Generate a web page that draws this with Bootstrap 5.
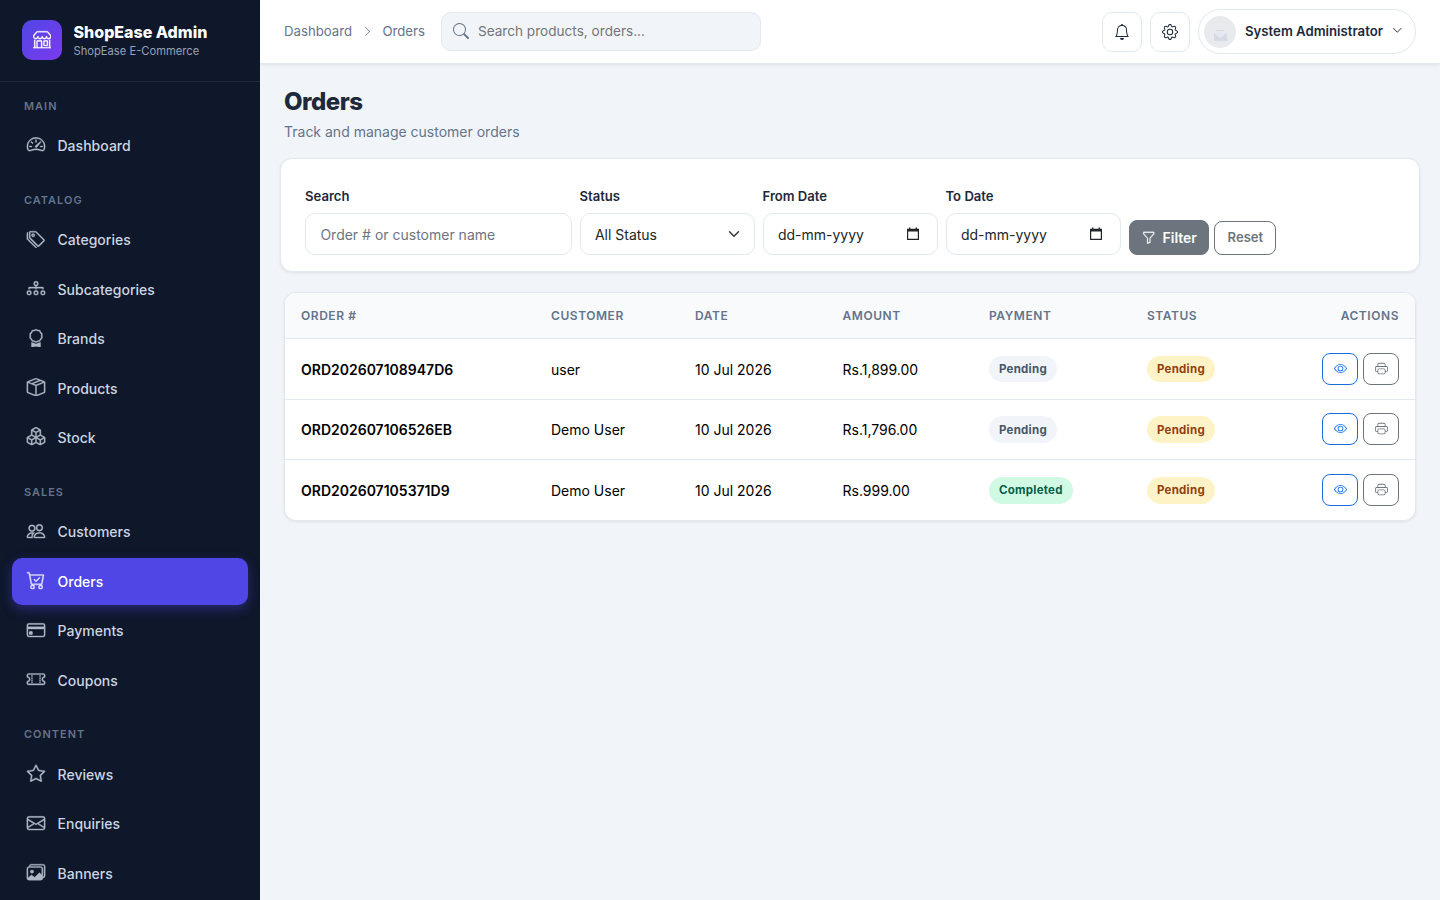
<!DOCTYPE html>
<html lang="en">
<head>
<meta charset="utf-8">
<meta name="viewport" content="width=device-width, initial-scale=1">
<title>Orders - ShopEase Admin</title>
<link href="https://cdn.jsdelivr.net/npm/bootstrap@5.3.0/dist/css/bootstrap.min.css" rel="stylesheet">
<style>
  body { font-family: Inter, "Liberation Sans", sans-serif; line-height: 1.6; background: #f1f5f9; color: #1e293b; height: 100vh; overflow: hidden; }
  svg.ico { width: 1em; height: 1em; fill: currentColor; display: block; flex: none; }
  a { text-decoration: none; color: inherit; }

  .sidebar { width: 260px; background: #0f172a; height: 100vh; overflow: hidden; flex: none; }
  .brand-row { height: 82px; padding: 0 22px 1px; gap: 11.5px; border-bottom: 1px solid rgba(255,255,255,.08); }
  .brand-logo { width: 40px; height: 40px; border-radius: 10px; background: linear-gradient(135deg, #4f46e5, #7c3aed); color: #fff; font-size: 18.4px; }
  .brand-logo svg { stroke: currentColor; stroke-width: .25; margin-top: -1px; }
  .brand-name { font-size: 16px; font-weight: 800; color: #fff; line-height: 20px; padding-top: 2px; }
  .brand-sub { font-size: 11.2px; color: #94a3b8; line-height: 19px; }
  .nav-label { font-size: 10.9px; font-weight: 600; letter-spacing: 1.05px; color: #64748b; line-height: 18px; padding: 19px 12px 7.7px; }
  .nav-label.first { padding-top: 14.5px; }
  .side-link { height: 47.04px; margin-bottom: 2.45px; padding: .9px 14px 0; gap: 11.5px; border-radius: 10px; color: #cbd5e1; font-size: 14px; font-weight: 500; letter-spacing: .02px; }
  .side-link svg { font-size: 18.4px; width: 20px; opacity: .85; margin-top: -3px; stroke: currentColor; stroke-width: .3; }
  .side-link.active { background: #4f46e5; color: #fff; box-shadow: 0 4px 12px rgba(79,70,229,.4); }

  .topbar { height: 64px; background: #fff; border-bottom: 1px solid #e2e8f0; box-shadow: 0 1px 3px rgba(0,0,0,.08); padding: 0 24px; }
  .crumbs { font-size: 13.2px; color: #64748b; gap: 9.7px; }
  .crumbs svg { font-size: 11px; }
  .top-search { width: 320px; height: 39px; border: 1px solid #e2e8f0; border-radius: 10px; background: #f1f5f9; color: #64748b; padding: 0 11px; gap: 9px; }
  .top-search svg { margin-top: -1px; }
  .top-search input { border: 0; background: none; outline: 0; font-size: 13.6px; width: 100%; padding: 0; }
  .top-search input::placeholder { color: #757575; }
  .icon-btn { width: 40px; height: 40px; border: 1px solid #e2e8f0; border-radius: 10px; background: #fff; color: #1e293b; font-size: 16px; }
  .user-pill { width: 218px; height: 45px; border: 1px solid #e2e8f0; border-radius: 50px; padding: 0 13px 0 5px; font-size: 13.2px; font-weight: 600; }
  .user-pill .caret { font-size: 10.5px; margin-top: -2px; }
  .avatar { width: 32px; height: 32px; margin-right: 9px; }

  .page-title { font-size: 24px; font-weight: 800; line-height: 29px; letter-spacing: -.48px; color: #1e293b; padding-top: 23px; }
  .page-sub { font-size: 14px; line-height: 23px; color: #64748b; padding-top: 4px; }

  .panel { background: #fff; border: 1px solid #e2e8f0; border-radius: 12px; box-shadow: 0 1px 3px rgba(0,0,0,.08); }
  .filters { padding: 16px 20px; margin: 15px -4px 0; }
  .filters .form-label { font-size: 13.1px; font-weight: 600; color: #1e293b; line-height: 21.8px; padding-top: 3px; margin-bottom: 5px; display: block; }
  .filters .form-control, .filters .form-select { height: 42px; border-color: #e2e8f0; border-radius: 10px; font-size: 14px; padding: 2px 14.4px 0; color: #212529; }
  .filters .form-control::placeholder { color: #6c757d; }
  .filters .form-select { background-position: right 12px center; }
  .date-box svg { font-size: 16px; margin: -2px 1px 0 0; }
  .btn-filter { height: 35px; border-radius: 8px; background: #6c757d; color: #fff; font-size: 14px; font-weight: 600; padding: 1px 11.5px 0 12px; border: 1px solid #6c757d; gap: 7.5px; }
  .btn-filter svg { font-size: 13.5px; stroke: currentColor; stroke-width: .3; }
  .btn-reset { width: 62px; height: 34px; border-radius: 8px; font-size: 13.1px; font-weight: 600; padding: 0; border: 1px solid #6c757d; color: #6c757d; background: #fff; margin-left: 5px; }

  .orders-panel { margin-top: 20.3px; overflow: hidden; }
  .orders-table { table-layout: fixed; margin: 0; color: #000; font-size: 14px; }
  .orders-table th { background: #f8fafc; color: #64748b; font-size: 12px; font-weight: 600; letter-spacing: .55px; text-transform: uppercase; padding: 0 16px; height: 45.5px; border-bottom: 1px solid #e2e8f0; vertical-align: middle; }
  .orders-table td { padding: 2px 16px 0; height: 60.5px; border-bottom: 1px solid #e2e8f0; vertical-align: middle; }
  .orders-table td:last-child { padding-top: 0; }
  .orders-table tr:last-child td { border-bottom: 0; }
  .orders-table .order-no { font-weight: 600; }
  .c-order { width: 250px; } .c-cust { width: 144px; } .c-date { width: 147.5px; } .c-amt { width: 146.5px; } .c-pay { width: 158px; } .c-stat { width: 130px; }
  .pill { display: inline-block; font-size: 11.5px; font-weight: 700; line-height: 18px; padding: 4.4px 10px; border-radius: 50px; position: relative; top: -.8px; letter-spacing: .25px; }
  .pill-muted { background: #f1f5f9; color: #475569; }
  .pill-warn { background: #fef3c7; color: #92400e; }
  .pill-ok { background: #d1fae5; color: #065f46; }
  .act { width: 36px; height: 32px; border: 1px solid; border-radius: 8px; font-size: 13px; padding: 0; background: #fff; }
  .act svg { margin-top: -1.5px; }
  .act-view { color: #0d6efd; border-color: #1a6dd8; margin-right: 5px; } .act-print { color: #6c757d; }
</style>
</head>
<body class="d-flex">
<svg class="d-none" xmlns="http://www.w3.org/2000/svg">
  <symbol id="shop" viewBox="0 0 16 16"><path d="M2.97 1.35A1 1 0 0 1 3.73 1h8.54a1 1 0 0 1 .76.35l2.609 3.044A1.5 1.5 0 0 1 16 5.37v.255a2.375 2.375 0 0 1-4.25 1.458A2.371 2.371 0 0 1 9.875 8 2.37 2.37 0 0 1 8 7.083 2.37 2.37 0 0 1 6.125 8a2.37 2.37 0 0 1-1.875-.917A2.375 2.375 0 0 1 0 5.625V5.37a1.5 1.5 0 0 1 .361-.976zm1.78 4.275a1.375 1.375 0 0 0 2.75 0 .5.5 0 0 1 1 0 1.375 1.375 0 0 0 2.75 0 .5.5 0 0 1 1 0 1.375 1.375 0 1 0 2.75 0V5.37a.5.5 0 0 0-.12-.325L12.27 2H3.73L1.12 5.045A.5.5 0 0 0 1 5.37v.255a1.375 1.375 0 0 0 2.75 0 .5.5 0 0 1 1 0M1.5 8.5A.5.5 0 0 1 2 9v6h1v-5a1 1 0 0 1 1-1h3a1 1 0 0 1 1 1v5h6V9a.5.5 0 0 1 1 0v6h.5a.5.5 0 0 1 0 1H.5a.5.5 0 0 1 0-1H1V9a.5.5 0 0 1 .5-.5M4 15h3v-5H4zm5-5a1 1 0 0 1 1-1h2a1 1 0 0 1 1 1v3a1 1 0 0 1-1 1h-2a1 1 0 0 1-1-1zm3 0h-2v3h2z"/></symbol>
  <symbol id="speed" viewBox="0 0 16 16"><path d="M8 4a.5.5 0 0 1 .5.5V6a.5.5 0 0 1-1 0V4.5A.5.5 0 0 1 8 4M3.732 5.732a.5.5 0 0 1 .707 0l.915.914a.5.5 0 1 1-.708.708l-.914-.915a.5.5 0 0 1 0-.707M2 10a.5.5 0 0 1 .5-.5h1.586a.5.5 0 0 1 0 1H2.5A.5.5 0 0 1 2 10m9.5 0a.5.5 0 0 1 .5-.5h1.5a.5.5 0 0 1 0 1H12a.5.5 0 0 1-.5-.5m.754-4.246a.39.39 0 0 0-.527-.02L7.547 9.31a.91.91 0 1 0 1.302 1.258l3.434-4.297a.39.39 0 0 0-.029-.518z"/><path fill-rule="evenodd" d="M0 10a8 8 0 1 1 15.547 2.661c-.442 1.253-1.845 1.602-2.932 1.25C11.309 13.488 9.475 13 8 13c-1.474 0-3.31.488-4.615.911-1.087.352-2.49.003-2.932-1.25A8 8 0 0 1 0 10m8-7a7 7 0 0 0-6.603 9.329c.203.575.923.876 1.68.63C4.397 12.533 6.358 12 8 12s3.604.532 4.923.96c.757.245 1.477-.056 1.68-.631A7 7 0 0 0 8 3"/></symbol>
  <symbol id="tags" viewBox="0 0 16 16"><path d="M3 2v4.586l7 7L14.586 9l-7-7zM2 2a1 1 0 0 1 1-1h4.586a1 1 0 0 1 .707.293l7 7a1 1 0 0 1 0 1.414l-4.586 4.586a1 1 0 0 1-1.414 0l-7-7A1 1 0 0 1 2 6.586z"/><path d="M5.5 5a.5.5 0 1 1 0-1 .5.5 0 0 1 0 1m0 1a1.5 1.5 0 1 0 0-3 1.5 1.5 0 0 0 0 3M1 7.086a1 1 0 0 0 .293.707L8.75 15.25l-.043.043a1 1 0 0 1-1.414 0l-7-7A1 1 0 0 1 0 7.586V3a1 1 0 0 1 1-1z"/></symbol>
  <symbol id="diagram" viewBox="0 0 16 16"><path fill-rule="evenodd" d="M6 3.5A1.5 1.5 0 0 1 7.5 2h1A1.5 1.5 0 0 1 10 3.5v1A1.5 1.5 0 0 1 8.5 6v1H14a.5.5 0 0 1 .5.5v1a.5.5 0 0 1-1 0V8h-5v.5a.5.5 0 0 1-1 0V8h-5v.5a.5.5 0 0 1-1 0v-1A.5.5 0 0 1 2 7h5.5V6A1.5 1.5 0 0 1 6 4.5zM8.5 5a.5.5 0 0 0 .5-.5v-1a.5.5 0 0 0-.5-.5h-1a.5.5 0 0 0-.5.5v1a.5.5 0 0 0 .5.5zM0 11.5A1.5 1.5 0 0 1 1.5 10h1A1.5 1.5 0 0 1 4 11.5v1A1.5 1.5 0 0 1 2.5 14h-1A1.5 1.5 0 0 1 0 12.5zm1.5-.5a.5.5 0 0 0-.5.5v1a.5.5 0 0 0 .5.5h1a.5.5 0 0 0 .5-.5v-1a.5.5 0 0 0-.5-.5zm4.5.5A1.5 1.5 0 0 1 7.5 10h1a1.5 1.5 0 0 1 1.5 1.5v1A1.5 1.5 0 0 1 8.5 14h-1A1.5 1.5 0 0 1 6 12.5zm1.5-.5a.5.5 0 0 0-.5.5v1a.5.5 0 0 0 .5.5h1a.5.5 0 0 0 .5-.5v-1a.5.5 0 0 0-.5-.5zm4.5.5a1.5 1.5 0 0 1 1.5-1.5h1a1.5 1.5 0 0 1 1.5 1.5v1a1.5 1.5 0 0 1-1.5 1.5h-1a1.5 1.5 0 0 1-1.5-1.5zm1.5-.5a.5.5 0 0 0-.5.5v1a.5.5 0 0 0 .5.5h1a.5.5 0 0 0 .5-.5v-1a.5.5 0 0 0-.5-.5z"/></symbol>
  <symbol id="award" viewBox="0 0 16 16"><path d="M9.669.864 8 0 6.331.864l-1.858.282-.842 1.68-1.337 1.32L2.6 6l-.306 1.854 1.337 1.32.842 1.68 1.858.282L8 12l1.669-.864 1.858-.282.842-1.68 1.337-1.32L13.4 6l.306-1.854-1.337-1.32-.842-1.68zm1.196 1.193.684 1.365 1.086 1.072L12.387 6l.248 1.506-1.086 1.072-.684 1.365-1.51.229L8 10.874l-1.355-.702-1.51-.229-.684-1.365-1.086-1.072L3.614 6l-.25-1.506 1.087-1.072.684-1.365 1.51-.229L8 1.126l1.356.702z"/><path d="M4 11.794V16l4-1 4 1v-4.206l-2.018.306L8 13.126 6.018 12.1z"/></symbol>
  <symbol id="box" viewBox="0 0 16 16"><path d="M8.186 1.113a.5.5 0 0 0-.372 0L1.846 3.5l2.404.961L10.404 2zm3.564 1.426L5.596 5 8 5.961 14.154 3.5zm3.25 1.7-6.5 2.6v7.922l6.5-2.6V4.24zM7.5 14.762V6.838L1 4.239v7.923zM7.443.184a1.5 1.5 0 0 1 1.114 0l7.129 2.852A.5.5 0 0 1 16 3.5v8.662a1 1 0 0 1-.629.928l-7.185 2.874a.5.5 0 0 1-.372 0L.63 13.09a1 1 0 0 1-.63-.928V3.5a.5.5 0 0 1 .314-.464z"/></symbol>
  <symbol id="boxes" viewBox="0 0 16 16"><path d="M7.752.066a.5.5 0 0 1 .496 0l3.75 2.143a.5.5 0 0 1 .252.434v3.995l3.498 2A.5.5 0 0 1 16 9.07v4.286a.5.5 0 0 1-.252.434l-3.75 2.143a.5.5 0 0 1-.496 0l-3.502-2-3.502 2.001a.5.5 0 0 1-.496 0l-3.75-2.143A.5.5 0 0 1 0 13.357V9.071a.5.5 0 0 1 .252-.434L3.75 6.638V2.643a.5.5 0 0 1 .252-.434zM4.25 7.504 1.508 9.071l2.742 1.567 2.742-1.567zM7.5 9.933l-2.75 1.571v3.134l2.75-1.571zm1 3.134 2.75 1.571v-3.134L8.5 9.933zm.508-3.996 2.742 1.567 2.742-1.567-2.742-1.567zm2.242-2.433V3.504L8.5 5.076V8.21zM7.5 8.21V5.076L4.75 3.504v3.134zM5.258 2.643 8 4.21l2.742-1.567L8 1.076zM15 9.933l-2.75 1.571v3.134L15 13.067zM3.75 14.638v-3.134L1 9.933v3.134z"/></symbol>
  <symbol id="people" viewBox="0 0 16 16"><path d="M15 14s1 0 1-1-1-4-5-4-5 3-5 4 1 1 1 1zm-7.978-1L7 12.996c.001-.264.167-1.03.76-1.72C8.312 10.629 9.282 10 11 10c1.717 0 2.687.63 3.24 1.276.593.69.758 1.457.76 1.72l-.008.002-.014.002zM11 7a2 2 0 1 0 0-4 2 2 0 0 0 0 4m3-2a3 3 0 1 1-6 0 3 3 0 0 1 6 0M6.936 9.28a6 6 0 0 0-1.23-.247A7 7 0 0 0 5 9c-4 0-5 3-5 4q0 1 1 1h4.216A2.24 2.24 0 0 1 5 13c0-1.01.377-2.042 1.09-2.904.243-.294.526-.569.846-.816M4.92 10A5.5 5.5 0 0 0 4 13H1c0-.26.164-1.03.76-1.724.545-.636 1.492-1.256 3.16-1.275ZM1.5 5.5a3 3 0 1 1 6 0 3 3 0 0 1-6 0m3-2a2 2 0 1 0 0 4 2 2 0 0 0 0-4"/></symbol>
  <symbol id="cart" viewBox="0 0 16 16"><path d="M11.354 6.354a.5.5 0 0 0-.708-.708L8 8.293 6.854 7.146a.5.5 0 1 0-.708.708l1.5 1.5a.5.5 0 0 0 .708 0z"/><path d="M.5 1a.5.5 0 0 0 0 1h1.11l.401 1.607 1.498 7.985A.5.5 0 0 0 4 12h1a2 2 0 1 0 0 4 2 2 0 0 0 0-4h7a2 2 0 1 0 0 4 2 2 0 0 0 0-4h1a.5.5 0 0 0 .491-.408l1.5-8A.5.5 0 0 0 14.5 3H2.89l-.405-1.621A.5.5 0 0 0 2 1zm3.915 10L3.102 4h10.796l-1.313 7zM6 14a1 1 0 1 1-2 0 1 1 0 0 1 2 0m7 0a1 1 0 1 1-2 0 1 1 0 0 1 2 0"/></symbol>
  <symbol id="card-ico" viewBox="0 0 16 16"><path d="M0 4a2 2 0 0 1 2-2h12a2 2 0 0 1 2 2v8a2 2 0 0 1-2 2H2a2 2 0 0 1-2-2zm2-1a1 1 0 0 0-1 1v1h14V4a1 1 0 0 0-1-1zm13 4H1v5a1 1 0 0 0 1 1h12a1 1 0 0 0 1-1z"/><path d="M2 10a1 1 0 0 1 1-1h1a1 1 0 0 1 1 1v1a1 1 0 0 1-1 1H3a1 1 0 0 1-1-1z"/></symbol>
  <symbol id="ticket" viewBox="0 0 16 16"><path d="M4 4.85v.9h1v-.9zm7 0v.9h1v-.9zm-7 1.8v.9h1v-.9zm7 0v.9h1v-.9zm-7 1.8v.9h1v-.9zm7 0v.9h1v-.9zm-7 1.8v.9h1v-.9zm7 0v.9h1v-.9z"/><path d="M1.5 3A1.5 1.5 0 0 0 0 4.5V6a.5.5 0 0 0 .5.5 1.5 1.5 0 1 1 0 3 .5.5 0 0 0-.5.5v1.5A1.5 1.5 0 0 0 1.5 13h13a1.5 1.5 0 0 0 1.5-1.5V10a.5.5 0 0 0-.5-.5 1.5 1.5 0 0 1 0-3A.5.5 0 0 0 16 6V4.5A1.5 1.5 0 0 0 14.5 3zM1 4.5a.5.5 0 0 1 .5-.5h13a.5.5 0 0 1 .5.5v1.05a2.5 2.5 0 0 0 0 4.9v1.05a.5.5 0 0 1-.5.5h-13a.5.5 0 0 1-.5-.5v-1.05a2.5 2.5 0 0 0 0-4.9z"/></symbol>
  <symbol id="star" viewBox="0 0 16 16"><path d="M2.866 14.85c-.078.444.36.791.746.593l4.39-2.256 4.389 2.256c.386.198.824-.149.746-.592l-.83-4.73 3.522-3.356c.33-.314.16-.888-.282-.95l-4.898-.696L8.465.792a.513.513 0 0 0-.927 0L5.354 5.12l-4.898.696c-.441.062-.612.636-.283.95l3.523 3.356-.83 4.73zm4.905-2.767-3.686 1.894.694-3.957a.56.56 0 0 0-.163-.505L1.71 6.745l4.052-.576a.53.53 0 0 0 .393-.288L8 2.223l1.847 3.658a.53.53 0 0 0 .393.288l4.052.575-2.906 2.77a.56.56 0 0 0-.163.506l.694 3.957-3.686-1.894a.5.5 0 0 0-.461 0z"/></symbol>
  <symbol id="mail" viewBox="0 0 16 16"><path d="M0 4a2 2 0 0 1 2-2h12a2 2 0 0 1 2 2v8a2 2 0 0 1-2 2H2a2 2 0 0 1-2-2zm2-1a1 1 0 0 0-1 1v.217l7 4.2 7-4.2V4a1 1 0 0 0-1-1zm13 2.383-4.708 2.825L15 11.105zm-.034 6.876-5.64-3.471L8 9.583l-1.326-.795-5.64 3.47A1 1 0 0 0 2 13h12a1 1 0 0 0 .966-.741M1 11.105l4.708-2.897L1 5.383z"/></symbol>
  <symbol id="images" viewBox="0 0 16 16"><path d="M4.502 9a1.5 1.5 0 1 0 0-3 1.5 1.5 0 0 0 0 3"/><path d="M14.002 13a2 2 0 0 1-2 2h-10a2 2 0 0 1-2-2V5A2 2 0 0 1 2 3a2 2 0 0 1 2-2h10a2 2 0 0 1 2 2v8a2 2 0 0 1-1.998 2M14 2H4a1 1 0 0 0-1 1h9.002a2 2 0 0 1 2 2v7A1 1 0 0 0 15 11V3a1 1 0 0 0-1-1M2.002 4a1 1 0 0 0-1 1v8l2.646-2.354a.5.5 0 0 1 .63-.062l2.66 1.773 3.71-3.71a.5.5 0 0 1 .577-.094l1.777 1.947V5a1 1 0 0 0-1-1z"/></symbol>
  <symbol id="search" viewBox="0 0 16 16"><path d="M11.742 10.344a6.5 6.5 0 1 0-1.397 1.398h-.001q.044.06.098.115l3.85 3.85a1 1 0 0 0 1.415-1.414l-3.85-3.85a1 1 0 0 0-.115-.1zM12 6.5a5.5 5.5 0 1 1-11 0 5.5 5.5 0 0 1 11 0"/></symbol>
  <symbol id="bell" viewBox="0 0 16 16"><path d="M8 16a2 2 0 0 0 2-2H6a2 2 0 0 0 2 2M8 1.918l-.797.161A4 4 0 0 0 4 6c0 .628-.134 2.197-.459 3.742-.16.767-.376 1.566-.663 2.258h10.244c-.287-.692-.502-1.49-.663-2.258C12.134 8.197 12 6.628 12 6a4 4 0 0 0-3.203-3.92zM14.22 12c.223.447.481.801.78 1H1c.299-.199.557-.553.78-1C2.68 10.2 3 6.88 3 6c0-2.42 1.72-4.44 4.005-4.901a1 1 0 1 1 1.99 0A5 5 0 0 1 13 6c0 .88.32 4.2 1.22 6"/></symbol>
  <symbol id="gear" viewBox="0 0 16 16"><path d="M8 4.754a3.246 3.246 0 1 0 0 6.492 3.246 3.246 0 0 0 0-6.492M5.754 8a2.246 2.246 0 1 1 4.492 0 2.246 2.246 0 0 1-4.492 0"/><path d="M9.796 1.343c-.527-1.79-3.065-1.79-3.592 0l-.094.319a.873.873 0 0 1-1.255.52l-.292-.16c-1.64-.892-3.433.902-2.54 2.541l.159.292a.873.873 0 0 1-.52 1.255l-.319.094c-1.79.527-1.79 3.065 0 3.592l.319.094a.873.873 0 0 1 .52 1.255l-.16.292c-.892 1.64.901 3.434 2.541 2.54l.292-.159a.873.873 0 0 1 1.255.52l.094.319c.527 1.79 3.065 1.79 3.592 0l.094-.319a.873.873 0 0 1 1.255-.52l.292.16c1.64.893 3.434-.902 2.54-2.541l-.159-.292a.873.873 0 0 1 .52-1.255l.319-.094c1.79-.527 1.79-3.065 0-3.592l-.319-.094a.873.873 0 0 1-.52-1.255l.16-.292c.893-1.64-.902-3.433-2.541-2.54l-.292.159a.873.873 0 0 1-1.255-.52zm-2.633.283c.246-.835 1.428-.835 1.674 0l.094.319a1.873 1.873 0 0 0 2.693 1.115l.291-.16c.764-.415 1.6.42 1.184 1.185l-.159.292a1.873 1.873 0 0 0 1.116 2.692l.318.094c.835.246.835 1.428 0 1.674l-.319.094a1.873 1.873 0 0 0-1.115 2.693l.16.291c.415.764-.42 1.6-1.185 1.184l-.291-.159a1.873 1.873 0 0 0-2.693 1.116l-.094.318c-.246.835-1.428.835-1.674 0l-.094-.319a1.873 1.873 0 0 0-2.692-1.115l-.292.16c-.764.415-1.6-.42-1.184-1.185l.159-.291A1.873 1.873 0 0 0 1.945 8.93l-.319-.094c-.835-.246-.835-1.428 0-1.674l.319-.094A1.873 1.873 0 0 0 3.06 4.377l-.16-.292c-.415-.764.42-1.6 1.185-1.184l.292.159a1.873 1.873 0 0 0 2.692-1.115z"/></symbol>
  <symbol id="chev-d" viewBox="0 0 16 16"><path d="M1.646 4.646a.5.5 0 0 1 .708 0L8 10.293l5.646-5.647a.5.5 0 0 1 .708.708l-6 6a.5.5 0 0 1-.708 0l-6-6a.5.5 0 0 1 0-.708"/></symbol>
  <symbol id="chev-r" viewBox="0 0 16 16"><path d="M4.646 1.646a.5.5 0 0 1 .708 0l6 6a.5.5 0 0 1 0 .708l-6 6a.5.5 0 0 1-.708-.708L10.293 8 4.646 2.354a.5.5 0 0 1 0-.708"/></symbol>
  <symbol id="funnel" viewBox="0 0 16 16"><path d="M1.5 1.5A.5.5 0 0 1 2 1h12a.5.5 0 0 1 .5.5v2a.5.5 0 0 1-.128.334L10 8.692V13.5a.5.5 0 0 1-.342.474l-3 1A.5.5 0 0 1 6 14.5V8.692L1.628 3.834A.5.5 0 0 1 1.5 3.5zm1 .5v1.308l4.372 4.858A.5.5 0 0 1 7 8.5v5.306l2-.666V8.5a.5.5 0 0 1 .128-.334L13.5 3.308V2z"/></symbol>
  <symbol id="eye" viewBox="0 0 16 16"><path d="M16 8s-3-5.5-8-5.5S0 8 0 8s3 5.5 8 5.5S16 8 16 8M1.173 8a13 13 0 0 1 1.66-2.043C4.12 4.668 5.88 3.5 8 3.5s3.879 1.168 5.168 2.457A13 13 0 0 1 14.828 8q-.086.13-.195.288c-.335.48-.83 1.12-1.465 1.755C11.879 11.332 10.119 12.5 8 12.5s-3.879-1.168-5.168-2.457A13 13 0 0 1 1.172 8z"/><path d="M8 5.5a2.5 2.5 0 1 0 0 5 2.5 2.5 0 0 0 0-5M4.5 8a3.5 3.5 0 1 1 7 0 3.5 3.5 0 0 1-7 0"/></symbol>
  <symbol id="printer" viewBox="0 0 16 16"><path d="M2.5 8a.5.5 0 1 0 0-1 .5.5 0 0 0 0 1"/><path d="M5 1a2 2 0 0 0-2 2v2H2a2 2 0 0 0-2 2v3a2 2 0 0 0 2 2h1v1a2 2 0 0 0 2 2h6a2 2 0 0 0 2-2v-1h1a2 2 0 0 0 2-2V7a2 2 0 0 0-2-2h-1V3a2 2 0 0 0-2-2zM4 3a1 1 0 0 1 1-1h6a1 1 0 0 1 1 1v2H4zm1 5a2 2 0 0 0-2 2v1H2a1 1 0 0 1-1-1V7a1 1 0 0 1 1-1h12a1 1 0 0 1 1 1v3a1 1 0 0 1-1 1h-1v-1a2 2 0 0 0-2-2zm7 2v3a1 1 0 0 1-1 1H5a1 1 0 0 1-1-1v-3a1 1 0 0 1 1-1h6a1 1 0 0 1 1 1"/></symbol>
  <symbol id="cal" viewBox="0 0 16 16"><path fill-rule="evenodd" d="M4 1.5h1.4v1.3h5.2V1.5H12v1.3h2V14H2V2.8h2zM3.2 5.5v7.3h9.6V5.5z"/></symbol>
</svg>

<aside class="sidebar">
  <div class="brand-row d-flex align-items-center">
    <div class="brand-logo d-flex align-items-center justify-content-center"><svg class="ico"><use href="#shop"/></svg></div>
    <div>
      <div class="brand-name">ShopEase Admin</div>
      <div class="brand-sub">ShopEase E-Commerce</div>
    </div>
  </div>
  <nav class="px-2 mx-1">
    <div class="nav-label first">MAIN</div>
    <a href="#" class="side-link d-flex align-items-center"><svg class="ico"><use href="#speed"/></svg>Dashboard</a>
    <div class="nav-label">CATALOG</div>
    <a href="#" class="side-link d-flex align-items-center"><svg class="ico"><use href="#tags"/></svg>Categories</a>
    <a href="#" class="side-link d-flex align-items-center"><svg class="ico"><use href="#diagram"/></svg>Subcategories</a>
    <a href="#" class="side-link d-flex align-items-center"><svg class="ico"><use href="#award"/></svg>Brands</a>
    <a href="#" class="side-link d-flex align-items-center"><svg class="ico"><use href="#box"/></svg>Products</a>
    <a href="#" class="side-link d-flex align-items-center"><svg class="ico"><use href="#boxes"/></svg>Stock</a>
    <div class="nav-label">SALES</div>
    <a href="#" class="side-link d-flex align-items-center"><svg class="ico"><use href="#people"/></svg>Customers</a>
    <a href="#" class="side-link active d-flex align-items-center"><svg class="ico"><use href="#cart"/></svg>Orders</a>
    <a href="#" class="side-link d-flex align-items-center"><svg class="ico"><use href="#card-ico"/></svg>Payments</a>
    <a href="#" class="side-link d-flex align-items-center"><svg class="ico"><use href="#ticket"/></svg>Coupons</a>
    <div class="nav-label">CONTENT</div>
    <a href="#" class="side-link d-flex align-items-center"><svg class="ico"><use href="#star"/></svg>Reviews</a>
    <a href="#" class="side-link d-flex align-items-center"><svg class="ico"><use href="#mail"/></svg>Enquiries</a>
    <a href="#" class="side-link d-flex align-items-center"><svg class="ico"><use href="#images"/></svg>Banners</a>
  </nav>
</aside>

<div class="flex-grow-1">
  <header class="topbar d-flex align-items-center">
    <div class="crumbs d-flex align-items-center">
      <a href="#">Dashboard</a>
      <svg class="ico"><use href="#chev-r"/></svg>
      <span>Orders</span>
    </div>
    <label class="top-search d-flex align-items-center ms-3">
      <svg class="ico"><use href="#search"/></svg>
      <input type="text" placeholder="Search products, orders...">
    </label>
    <div class="d-flex align-items-center gap-2 ms-auto">
      <button class="icon-btn d-flex align-items-center justify-content-center"><svg class="ico"><use href="#bell"/></svg></button>
      <button class="icon-btn d-flex align-items-center justify-content-center"><svg class="ico"><use href="#gear"/></svg></button>
      <div class="user-pill d-flex align-items-center">
        <svg class="avatar flex-shrink-0" viewBox="0 0 32 32"><circle cx="16" cy="16" r="16" fill="#e9eaee"/><path d="M12 14h8v1h-8z" fill="#d3d6db"/><path d="M10 17h13v8H10z" fill="#d5dbe5"/><path d="M10 17l6.500 5L23 17v-.5H10z" fill="#e4e9f0"/></svg>
        <span>System Administrator</span>
        <svg class="ico caret ms-auto"><use href="#chev-d"/></svg>
      </div>
    </div>
  </header>

  <main class="px-4">
    <h1 class="page-title mb-0">Orders</h1>
    <div class="page-sub">Track and manage customer orders</div>

    <form class="row g-2 panel filters align-items-end">
      <div class="col-3"><label class="form-label">Search</label><input class="form-control" placeholder="Order # or customer name"></div>
      <div class="col-2"><label class="form-label">Status</label><select class="form-select"><option>All Status</option></select></div>
      <div class="col-2"><label class="form-label">From Date</label>
        <div class="form-control date-box d-flex align-items-center justify-content-between"><span>dd-mm-yyyy</span><svg class="ico"><use href="#cal"/></svg></div></div>
      <div class="col-2"><label class="form-label">To Date</label>
        <div class="form-control date-box d-flex align-items-center justify-content-between"><span>dd-mm-yyyy</span><svg class="ico"><use href="#cal"/></svg></div></div>
      <div class="col-3 d-flex align-items-end">
        <button type="button" class="btn-filter d-flex align-items-center"><svg class="ico"><use href="#funnel"/></svg>Filter</button>
        <button type="button" class="btn-reset">Reset</button>
      </div>
    </form>

    <div class="panel orders-panel">
      <table class="table orders-table">
        <colgroup><col class="c-order"><col class="c-cust"><col class="c-date"><col class="c-amt"><col class="c-pay"><col class="c-stat"><col></colgroup>
        <thead><tr><th>Order #</th><th>Customer</th><th>Date</th><th>Amount</th><th>Payment</th><th>Status</th><th class="text-end">Actions</th></tr></thead>
        <tbody>
          <tr><td class="order-no">ORD202607108947D6</td><td>user</td><td>10 Jul 2026</td><td>Rs.1,899.00</td><td><span class="pill pill-muted">Pending</span></td><td><span class="pill pill-warn">Pending</span></td>
            <td><div class="d-flex justify-content-end"><button class="act act-view d-flex align-items-center justify-content-center"><svg class="ico"><use href="#eye"/></svg></button><button class="act act-print d-flex align-items-center justify-content-center"><svg class="ico"><use href="#printer"/></svg></button></div></td></tr>
          <tr><td class="order-no">ORD202607106526EB</td><td>Demo User</td><td>10 Jul 2026</td><td>Rs.1,796.00</td><td><span class="pill pill-muted">Pending</span></td><td><span class="pill pill-warn">Pending</span></td>
            <td><div class="d-flex justify-content-end"><button class="act act-view d-flex align-items-center justify-content-center"><svg class="ico"><use href="#eye"/></svg></button><button class="act act-print d-flex align-items-center justify-content-center"><svg class="ico"><use href="#printer"/></svg></button></div></td></tr>
          <tr><td class="order-no">ORD202607105371D9</td><td>Demo User</td><td>10 Jul 2026</td><td>Rs.999.00</td><td><span class="pill pill-ok">Completed</span></td><td><span class="pill pill-warn">Pending</span></td>
            <td><div class="d-flex justify-content-end"><button class="act act-view d-flex align-items-center justify-content-center"><svg class="ico"><use href="#eye"/></svg></button><button class="act act-print d-flex align-items-center justify-content-center"><svg class="ico"><use href="#printer"/></svg></button></div></td></tr>
        </tbody>
      </table>
    </div>
  </main>
</div>
<script src="https://cdn.jsdelivr.net/npm/bootstrap@5.3.0/dist/js/bootstrap.bundle.min.js"></script>
</body>
</html>
